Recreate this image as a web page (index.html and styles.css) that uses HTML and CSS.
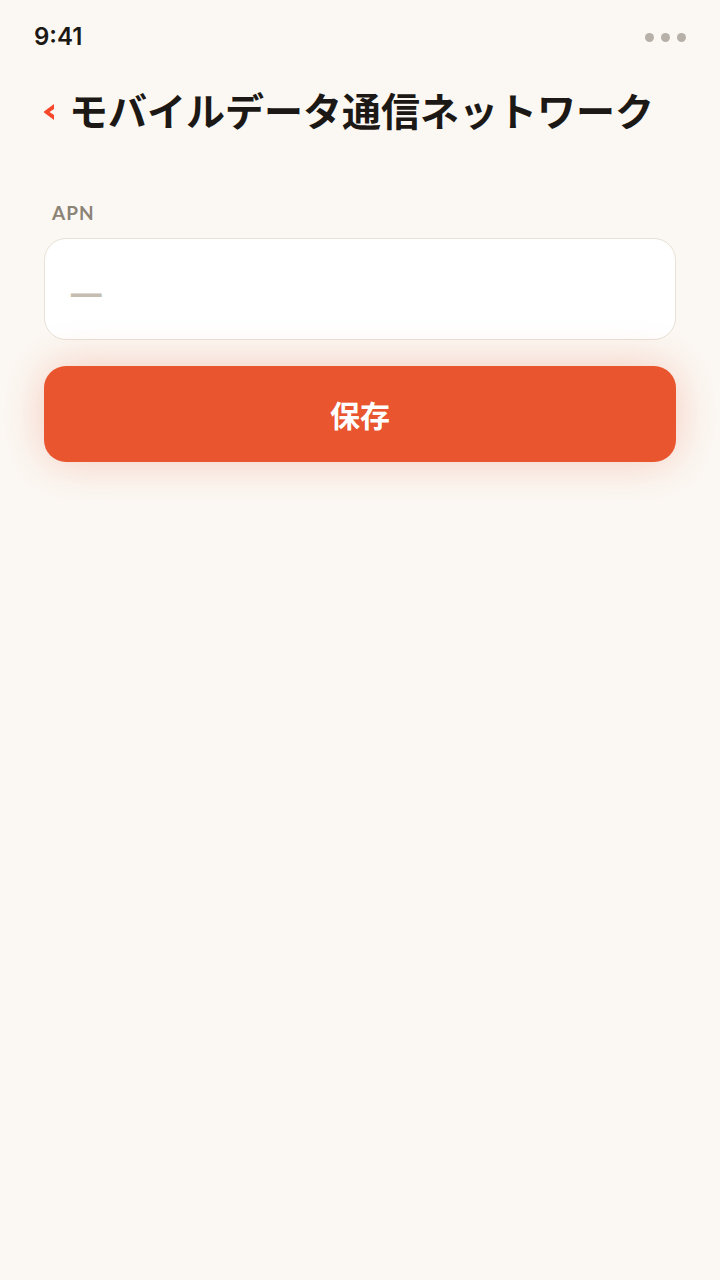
FILE: index.html
```html
<!DOCTYPE html>
<html lang="ja">
<head>
<meta charset="utf-8">
<meta name="viewport" content="width=device-width, initial-scale=1">
<title>モバイルデータ通信ネットワーク</title>
<link rel="stylesheet" href="styles.css">
</head>
<body>
<div class="status">
  <time class="clock">9:41</time>
  <div class="dots" aria-hidden="true"><span class="dot"></span><span class="dot"></span><span class="dot"></span></div>
</div>
<main class="screen">
  <header class="header">
    <button class="back" type="button" aria-label="戻る">
      <svg class="chevron" viewBox="0 0 10 18" aria-hidden="true"><path d="M10 2v5L5.500 10 10 13v5L0 10.500v-1z"/></svg>
    </button>
    <h1 class="title">モバイルデータ通信ネットワーク</h1>
  </header>
  <form class="form">
    <label class="label" for="apn">APN</label>
    <input class="field" id="apn" type="text" placeholder="—">
    <button class="save" type="button">保存</button>
  </form>
</main>
</body>
</html>
```
FILE: styles.css
```css
* { box-sizing: border-box; }
body {
  margin: 0;
  min-height: 100vh;
  background: #fbf8f3;
  color: #1c1815;
  font-family: Lato, "Noto Sans CJK JP", sans-serif;
}
.status {
  display: flex;
  align-items: center;
  justify-content: space-between;
  height: 74px;
  padding: 0 34px;
}
.clock { font-family: Inter, sans-serif; font-size: 24px; font-weight: 600; line-height: 32px; }
.dots { display: flex; gap: 7px; }
.dot { width: 9px; height: 9px; border-radius: 50%; background: #b7b0a8; }
.screen { padding: 8px 44px; }
.header { display: flex; align-items: center; gap: 15px; }
.back { display: flex; padding: 0; border: 0; background: none; }
.chevron { width: 10px; height: 18px; fill: #f5472a; }
.title { margin: 0; font-size: 39px; line-height: 58px; font-weight: 700; white-space: nowrap; }
.form { display: flex; flex-direction: column; padding-top: 61px; }
.label {
  padding-left: 8px;
  font-size: 19px;
  line-height: 24px;
  font-weight: 700;
  letter-spacing: 1px;
  color: #8c8377;
}
.field {
  height: 102px;
  margin: 13px 0 26px;
  padding: 0 24px;
  border: 1px solid #e8e1d6;
  border-radius: 22px;
  background: #fff;
  color: inherit;
  font-family: "Noto Sans CJK JP", sans-serif;
  font-size: 38px;
}
.field::placeholder { color: #c6bdb2; font-weight: 700; opacity: 1; }
.save {
  height: 96px;
  border: 0;
  border-radius: 22px;
  background: #e8552f;
  box-shadow: 0 0 44px rgba(232, 85, 47, 0.28);
  color: #fff;
  font-family: inherit;
  font-size: 30px;
  font-weight: 700;
}
```
